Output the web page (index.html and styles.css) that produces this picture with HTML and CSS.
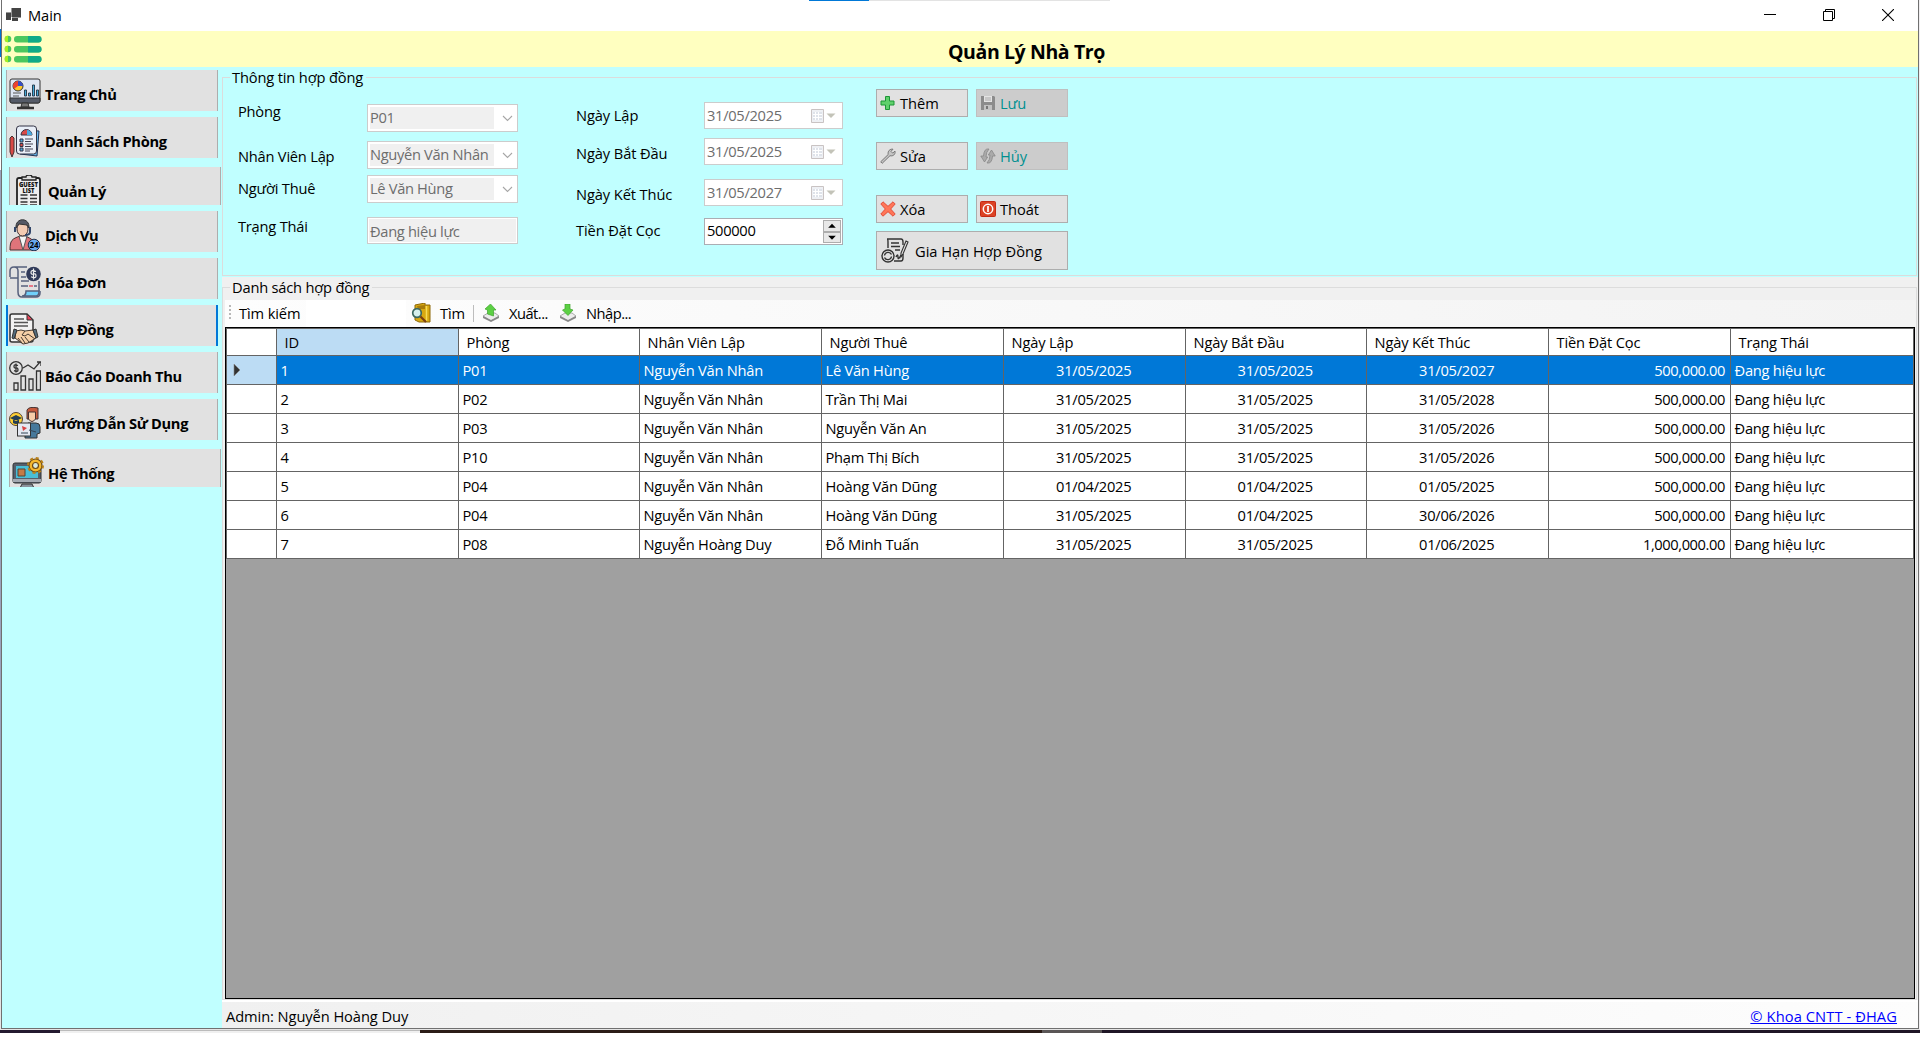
FILE: index.html
```html
<!DOCTYPE html>
<html lang="vi">
<head>
<meta charset="utf-8">
<title>Main</title>
<link rel="stylesheet" href="styles.css">
</head>
<body>
<div class="desktop">
<div class="edge-left"></div>
<div class="window">
  <header class="titlebar">
    <svg class="app-icon" width="16" height="16" viewBox="0 0 16 16"><path fill="#444" d="M6 1h9v9H6zM0 6h5v7H0zM6 11h6v3H6z"/><path fill="#999" d="M5 1h1v9H5zM0 5h5v1H0zM6 10h9v1H6z"/></svg>
    <span class="caption">Main</span>
    <div class="top-tab"><i></i></div>
    <div class="win-buttons">
      <svg width="12" height="12" viewBox="0 0 12 12"><path d="M0 5.5h12" stroke="#000"/></svg>
      <svg width="12" height="12" viewBox="0 0 12 12" fill="none" stroke="#000"><path d="M.5 2.5h9v9h-9zM2.5 2.500v-2h9v9h-2"/></svg>
      <svg width="12" height="12" viewBox="0 0 12 12"><path d="M0 0l12 12M12 0L0 12" stroke="#000" stroke-width="1.1"/></svg>
    </div>
  </header>
  <div class="banner">
    <svg class="menu" width="38" height="28" viewBox="0 0 38 28">
      <g fill="#4bc75e"><circle cx="4" cy="4" r="3.300"/><circle cx="4" cy="14" r="3.300"/><circle cx="4" cy="24" r="3.300"/><rect x="10" y="1" width="27.500" height="6.500" rx="3.200"/><rect x="10" y="11" width="27.500" height="6.500" rx="3.200"/><rect x="10" y="21" width="27.500" height="6.500" rx="3.200"/></g>
      <path fill="#a4f01f" d="M4 .7a3.300 3.300 0 0 0 0 6.600zM4 10.700a3.300 3.300 0 0 0 0 6.600zM4 20.700a3.300 3.300 0 0 0 0 6.600z"/>
      <path fill="#10aa88" d="M24 1h10.300a3.200 3.200 0 0 1 0 6.500H24zM24 11h10.300a3.200 3.200 0 0 1 0 6.500H24zM24 21h10.300a3.200 3.200 0 0 1 0 6.500H24z"/>
    </svg>
    <h1>Quản Lý Nhà Trọ</h1>
  </div>
  <div class="main">
    <nav class="sidebar">
      <a class="nav"><svg viewBox="0 0 32 32"><rect x="1" y="1" width="30" height="24" rx="2" fill="#dfe6f2" stroke="#333"/><path d="M1 20h30v3a2 2 0 0 1-2 2H3a2 2 0 0 1-2-2z" fill="#555b68" stroke="#333"/><path d="M13 25h6l1 4h-8z" fill="#777" stroke="#333"/><path d="M8 30h17" stroke="#333" stroke-width="2.500"/><circle cx="9" cy="8" r="5" fill="#ffc928" stroke="#333"/><path d="M9 8V3a5 5 0 0 0-4 8z" fill="#ed4030"/><path d="M9 8V3a5 5 0 0 1 5 5z" fill="#374fc4"/><path d="M15.500 18v-6h2v6zm4 0v-3h2v3zm4 0V7h2v11zm4 0v-6h2v6z" fill="#44a9d8" stroke="#234" stroke-width=".9"/><path d="M4 15h8M4 18h6" stroke="#555"/></svg><span>Trang Chủ</span></a>
      <a class="nav"><svg viewBox="0 0 32 32"><path d="M11 5l19 1-2 25-17-2z" fill="#67b9ed" stroke="#235"/><rect x="7.500" y="1" width="20" height="28" rx="3" fill="#e9eff8" stroke="#334" /><path d="M1 13l2-2 2 2v14l-2 5-2-5z" fill="#d94a47" stroke="#433"/><path d="M12 10a5 5 0 0 1 11 0z" fill="#d94a47" stroke="#334"/><path d="M18 5a5 5 0 0 1 5 5h-5z" fill="#4aa9de"/><path d="M11 14h3v3h-3zm0 9h3v3h-3z" fill="#4aa9de" stroke="#334"/><path d="M11 18.500h3v3h-3z" fill="#d94a47" stroke="#334"/><path d="M16 14h8M16 16.500h6M16 19h8M16 21.500h6M16 24h8M16 26h5" stroke="#445"/></svg><span>Danh Sách Phòng</span></a>
      <a class="nav shifted"><svg viewBox="0 0 32 32"><path d="M5 34V5q0-2 2-2h19q2 0 2 2v29" fill="#eee" stroke="#222" stroke-width="1.800"/><path d="M10 5V2h4q0-2 3-2t3 2h4v3z" fill="#ddd" stroke="#222" stroke-width="1.300"/><g font-family="Open Sans, sans-serif" font-weight="800" fill="#111" text-anchor="middle"><text x="16.500" y="12" font-size="6" textLength="19" lengthAdjust="spacingAndGlyphs">GUEST</text><text x="16.500" y="17.500" font-size="6" textLength="12" lengthAdjust="spacingAndGlyphs">LIST</text></g><path d="M8.500 20h7M8.500 23.500h7M8.500 27h7M8.500 30h7M18 20h7M18 23.500h7M18 27h7M18 30h7" stroke="#333" stroke-width="1.300"/></svg><span>Quản Lý</span></a>
      <a class="nav"><svg viewBox="0 0 32 32"><path d="M1 31c0-10 2-11 10-14h5c7 3 10 4 10 14z" fill="#df747a" stroke="#433"/><path d="M10 17l4 14 4-14z" fill="#f5f5f5" stroke="#555"/><ellipse cx="13.500" cy="10" rx="5.500" ry="7" fill="#f3cbb2" stroke="#433"/><path d="M7 9C6-2 21-2 20 9l-2-3-8-1z" fill="#555965" stroke="#333"/><path d="M6 8v5M21 8v5q0 3-5 3" stroke="#32466a" stroke-width="2" fill="none"/><circle cx="25" cy="26" r="5.800" fill="#68a8ed" stroke="#24334f"/><text x="25" y="29" font-size="8" font-weight="700" text-anchor="middle" font-family="Open Sans, sans-serif">24</text></svg><span>Dịch Vụ</span></a>
      <a class="nav"><svg viewBox="0 0 32 32" fill="none" stroke="#56607c" stroke-width="1.500"><path d="M1 11V5q0-4 4-4h13M9 12H1M9 5v21q0 5 4 5h14q4 0 4-4v-2M5 1q4 0 4 4M30 15v10"/><path d="M12 6h4M12 11h5M12 15h8" /><path d="M12 20h7M25 20h3"/><path d="M20 20h4" stroke="#e95468"/><path d="M17 25h13q0 5-3 5H13q4 0 4-5z" fill="#70d0fa"/><circle cx="24.500" cy="8" r="7.300" fill="#303a59" stroke="none"/><path d="M27 5.500q-5-2-5 .7t2.500 1.800 2.500 2-5 .700M24.500 2.500v11" stroke="#eee" stroke-width="1.200"/></svg><span>Hóa Đơn</span></a>
      <a class="nav active"><svg viewBox="0 0 32 32"><path d="M3 1h15l6 6v20q0 2-2 2H3q-2 0-2-2V3q0-2 2-2z" fill="#f2f2f2" stroke="#333" stroke-width="1.500"/><path d="M18 1v6h6z" fill="#e64459" stroke="#333"/><path d="M5 6h10M5 9.500h14M5 13h14" stroke="#555" stroke-width="1.300"/><path d="M7 18l5-1 4 1 8-1 3 8-8 5-5 1-8-6z" fill="#f5d0a8" stroke="#43382f"/><path d="M16 18l-3 4 3 1 3-2 7 5M9 25l4 5M12 24l4 6M16 24l4 5" stroke="#43382f" fill="none"/><path d="M5 16l3 1-3 9-2-1zM24 17l3-1 2 8-2 1z" fill="#536d7e" stroke="#333"/></svg><span>Hợp Đồng</span></a>
      <a class="nav"><svg viewBox="0 0 32 32" fill="none" stroke="#333" stroke-width="1.300"><circle cx="7" cy="8" r="6.300"/><path d="M9 5.500q-4-1.500-4 .7T7 8t2 2-4 .600M7 3.500v9M14 8l5-3 6 4 6-7M28 2h4v4M5 23h4v7H5zM12 16h4.500v14H12zM20 19h4v11h-4zM27.500 11h4v19h-4z"/></svg><span>Báo Cáo Doanh Thu</span></a>
      <a class="nav"><svg viewBox="0 0 32 32"><path d="M16 31V19l3-3h8q4 0 4 4v6l-3 1v4z" fill="#47799b" stroke="#333"/><path d="M18 3q2-4 11-2v11H18z" fill="#c65a3d" stroke="#433"/><path d="M19.500 5h7v7q-3.500 5-7 0z" fill="#f7cda8" stroke="#433"/><circle cx="7" cy="12" r="6.500" fill="#ffd034" stroke="#543"/><path d="M1 11l6-3 6 3-6 3zM4 13v3q3 2 6 0v-3" fill="#253f55"/><rect x="8.500" y="16" width="13" height="13" fill="#e4e9f2" stroke="#333"/><path d="M13 19l5 2-4 3z" fill="#d94343"/><path d="M12 26h7M20 23l7 2" stroke="#345"/></svg><span>Hướng Dẫn Sử Dụng</span></a>
      <a class="nav shifted"><svg viewBox="0 0 32 32"><rect x="1" y="6" width="28" height="20" rx="2" fill="#555f6c" stroke="#333"/><path d="M4 9h22v12H4z" fill="#49bed7"/><path d="M1 22h28v3H1z" fill="#a4aab2"/><path d="M10 27h10l2 4H8z" fill="#8a929b" stroke="#333"/><path d="M6 12h7v7H6z" fill="#c47b46" stroke="#543"/><circle cx="23.500" cy="8.500" r="6.500" fill="#f5b92e" stroke="#6d4a17" stroke-width="1.200"/><circle cx="23.500" cy="8.500" r="7.500" fill="none" stroke="#b98018" stroke-width="2" stroke-dasharray="3 2.900"/><circle cx="23.500" cy="8.500" r="3" fill="#d8eadf" stroke="#6d4a17" stroke-width="1.200"/></svg><span>Hệ Thống</span></a>
    </nav>
    <div class="content">
      <section class="panel-info">
        <fieldset class="group info">
          <legend>Thông tin hợp đồng</legend>
          <div class="form">
            <div class="labels labels-a"><label>Phòng</label><label>Nhân Viên Lập</label><label>Người Thuê</label><label>Trạng Thái</label></div>
            <div class="fields fields-a">
              <div class="combo"><b>P01</b><svg width="11" height="7" viewBox="0 0 11 7"><path d="M1 1l4.500 4.500L10 1"/></svg></div>
              <div class="combo"><b>Nguyễn Văn Nhân</b><svg width="11" height="7" viewBox="0 0 11 7"><path d="M1 1l4.500 4.500L10 1"/></svg></div>
              <div class="combo"><b>Lê Văn Hùng</b><svg width="11" height="7" viewBox="0 0 11 7"><path d="M1 1l4.500 4.500L10 1"/></svg></div>
              <div class="combo plain"><b>Đang hiệu lực</b></div>
            </div>
            <div class="labels labels-b"><label>Ngày Lập</label><label>Ngày Bắt Đầu</label><label>Ngày Kết Thúc</label><label>Tiền Đặt Cọc</label></div>
            <div class="fields fields-b">
              <div class="date"><span>31/05/2025</span><svg width="26" height="16" viewBox="0 0 26 16"><use href="#cal"/></svg></div>
              <div class="date"><span>31/05/2025</span><svg width="26" height="16" viewBox="0 0 26 16"><use href="#cal"/></svg></div>
              <div class="date"><span>31/05/2027</span><svg width="26" height="16" viewBox="0 0 26 16"><use href="#cal"/></svg></div>
              <div class="date spin"><span>500000</span><div class="spinner"><svg viewBox="0 0 16 10"><path d="M4 7h8L8 3z"/></svg><svg viewBox="0 0 16 10"><path d="M4 3h8L8 7z"/></svg></div></div>
            </div>
            <div class="actions">
              <button><svg viewBox="0 0 16 16"><path d="M5.500 1.500h4v4.500h4.500v4H9.500v4.500h-4V10H1V6h4.500z" fill="#5fd06c" stroke="#1d9637"/></svg>Thêm</button>
              <button class="off"><svg viewBox="0 0 16 16"><path d="M1 1h13l1 1v13H1z" fill="#8c8c8c"/><path d="M4 1h8v6H4z" fill="#e4e4e4"/><path d="M5 3h6M5 5h6" stroke="#aaa"/><path d="M4 10h8v5H4z" fill="#c2c2c2"/><path d="M6 11h2v3H6z" fill="#777"/></svg>Lưu</button>
              <button><svg viewBox="0 0 16 16"><path d="M2.200 15.300L.7 13.800l7.500-7.300C7.500 3 10 .7 13 1.200l-2 2.200 1.700 1.700 2.300-2c.7 3.300-2 5.400-5 4.600z" fill="#c5c5c5" stroke="#777" stroke-width="1"/></svg>Sửa</button>
              <button class="off"><svg viewBox="0 0 16 16"><path d="M9 1Q4 0 3.500 8H.8L4.500 14l3.200-5H6Q6 4 9 1zM7 15q5 1 5.500-7h2.700L11.500 2 8.300 7H10q0 5-3 8z" fill="#aaa" stroke="#888" stroke-width=".8"/></svg>Hủy</button>
              <button><svg viewBox="0 0 16 16"><path d="M3 .8L8 5.300 13 .8 15.200 3 10.700 8l4.500 5-2.200 2.200L8 10.700l-5 4.500L.8 13l4.500-5L.8 3z" fill="#ff7658" stroke="#dd3c28" stroke-width=".8"/></svg>Xóa</button>
              <button><svg viewBox="0 0 16 16"><rect x=".5" y=".5" width="15" height="15" rx="1" fill="#dc4325" stroke="#c52b15"/><circle cx="8" cy="8" r="4.700" fill="none" stroke="#fff" stroke-width="1.500"/><path d="M8 5v6" stroke="#fff" stroke-width="1.700"/></svg>Thoát</button>
              <button class="wide"><svg viewBox="0 0 28 26" fill="none" stroke="#333" stroke-width="1.400"><path d="M7 10V4q0-3-1-3h14q2 0 2 3v3M13 23h7q2 0 2-3v-4M10 5h8M10 8.500h9M14 12h5M15 19q2-4 2 0t3-2"/><path d="M27 4l-5 12-2 3v-4l5-12z" stroke-width="1.100"/><circle cx="7" cy="18" r="6"/><path d="M3.500 17.500a3.700 3.700 0 0 1 7-1M10.500 18.500a3.700 3.700 0 0 1-7 1"/></svg>Gia Hạn Hợp Đồng</button>
            </div>
          </div>
        </fieldset>
      </section>
      <section class="panel-list">
        <fieldset class="group list">
          <legend>Danh sách hợp đồng</legend>
          <div class="toolbar">
            <i class="grip"></i><span class="t-label">Tìm kiếm</span><div class="search"></div>
            <svg class="find" width="20" height="20" viewBox="0 0 20 20"><path d="M4 2l10-2v2h5v17H8L4 17z" fill="#d9a911" stroke="#8e6808"/><path d="M6 3l8-1v4H7z" fill="#a87c0b"/><path d="M15.500 3v15" fill="none" stroke="#f7dd56" stroke-width="1.500"/><circle cx="6" cy="10" r="4.300" fill="#d5f0ee" stroke="#3b6961" stroke-width="1.700"/><path d="M9.500 13.500L15 19" stroke="#7a3f11" stroke-width="2.200"/></svg>
            <span class="t-find">Tìm</span><i class="sep"></i>
            <svg class="io" width="18" height="18" viewBox="0 0 18 18"><path d="M1 12l5-3h7l4 3-8 5z" fill="#ececec" stroke="#aaa"/><path d="M1 12l8 4 8-4v2l-8 4-8-4z" fill="#888"/><path d="M8.500 0l5.500 6h-2.500v6l-6-2V6L3 5z" fill="#5cd044" stroke="#3fa52e" stroke-width=".7"/></svg>
            <span class="t-out">Xuất...</span>
            <svg class="io" width="18" height="18" viewBox="0 0 18 18"><path d="M1 12l5-3h7l4 3-8 5z" fill="#ececec" stroke="#aaa"/><path d="M1 12l8 4 8-4v2l-8 4-8-4z" fill="#888"/><path d="M6 0h5v5l3 1-5 5.500L3.500 6 6 5z" fill="#5cd044" stroke="#3fa52e" stroke-width=".7"/></svg>
            <span class="t-in">Nhập...</span>
          </div>
          <div class="grid">
            <table>
              <colgroup><col class="c0"><col class="w182"><col class="w181"><col class="w182"><col class="w182"><col class="w182"><col class="w181"><col class="w182"><col class="w182"><col class="w183"></colgroup>
              <thead><tr><th></th><th class="hot">ID</th><th>Phòng</th><th>Nhân Viên Lập</th><th>Người Thuê</th><th>Ngày Lập</th><th>Ngày Bắt Đầu</th><th>Ngày Kết Thúc</th><th>Tiền Đặt Cọc</th><th>Trạng Thái</th></tr></thead>
              <tbody>
              <tr class="selected"><td><svg width="8" height="14" viewBox="0 0 8 14"><path d="M1 1l6 6-6 6z" fill="#333" stroke="#888" stroke-width=".6"/></svg></td><td>1</td><td>P01</td><td>Nguyễn Văn Nhân</td><td>Lê Văn Hùng</td><td>31/05/2025</td><td>31/05/2025</td><td>31/05/2027</td><td>500,000.00</td><td>Đang hiệu lực</td></tr>
              <tr><td></td><td>2</td><td>P02</td><td>Nguyễn Văn Nhân</td><td>Trần Thị Mai</td><td>31/05/2025</td><td>31/05/2025</td><td>31/05/2028</td><td>500,000.00</td><td>Đang hiệu lực</td></tr>
              <tr><td></td><td>3</td><td>P03</td><td>Nguyễn Văn Nhân</td><td>Nguyễn Văn An</td><td>31/05/2025</td><td>31/05/2025</td><td>31/05/2026</td><td>500,000.00</td><td>Đang hiệu lực</td></tr>
              <tr><td></td><td>4</td><td>P10</td><td>Nguyễn Văn Nhân</td><td>Phạm Thị Bích</td><td>31/05/2025</td><td>31/05/2025</td><td>31/05/2026</td><td>500,000.00</td><td>Đang hiệu lực</td></tr>
              <tr><td></td><td>5</td><td>P04</td><td>Nguyễn Văn Nhân</td><td>Hoàng Văn Dũng</td><td>01/04/2025</td><td>01/04/2025</td><td>01/05/2025</td><td>500,000.00</td><td>Đang hiệu lực</td></tr>
              <tr><td></td><td>6</td><td>P04</td><td>Nguyễn Văn Nhân</td><td>Hoàng Văn Dũng</td><td>31/05/2025</td><td>01/04/2025</td><td>30/06/2026</td><td>500,000.00</td><td>Đang hiệu lực</td></tr>
              <tr><td></td><td>7</td><td>P08</td><td>Nguyễn Hoàng Duy</td><td>Đỗ Minh Tuấn</td><td>31/05/2025</td><td>31/05/2025</td><td>01/06/2025</td><td>1,000,000.00</td><td>Đang hiệu lực</td></tr>
              </tbody>
            </table>
          </div>
        </fieldset>
      </section>
      <footer class="status"><span>Admin: Nguyễn Hoàng Duy</span><a>© Khoa CNTT - ĐHAG</a></footer>
    </div>
  </div>
</div>
<div class="edge-right"></div>
<div class="taskbar"><i class="t1"></i><i class="t2"></i><i class="t3"></i><i class="t4"></i><i class="t5"></i></div>
</div>
<svg width="0" height="0" class="defs"><defs><g id="cal"><path d="M1.500 1.500h12v13h-12z" fill="#eef0f4" stroke="#c9c3c3"/><path d="M3 4h9v8H3z" fill="#dfe3ea"/><path d="M3 6.500h9M3 9.500h9M5.500 4v8M8.500 4v8" stroke="#fff"/><path d="M16.500 5.500h9L21 10z" fill="#c3c3b8"/></g></defs></svg>
</body>
</html>
```
FILE: styles.css
```css
* { box-sizing: border-box; }
body { margin: 0; background: #fff; font: 14.67px/20px "Open Sans", "Noto Sans", sans-serif; color: #000; letter-spacing: -0.25px; overflow: hidden; }
svg { display: block; flex: none; }
i { display: block; }
.defs { position: absolute; }
.desktop { display: grid; grid-template-columns: 1px 1918px 1px; grid-template-rows: 1029px 4px; height: 1033px; }
.edge-left { background: linear-gradient(#fff 0 29px, #0072d2 29px 57px, #fff 57px 170px, #9aa3bd 170px 960px, #e5e5e5 960px); }
.edge-right { background: #f0eef0; }
.window { border: 1px solid #707070; border-top: 0; display: flex; flex-direction: column; min-width: 0; }

.titlebar { height: 31px; display: flex; align-items: flex-start; padding-left: 4px; }
.app-icon { margin-top: 7px; }
.caption { margin: 5px 0 0 6px; width: 41px; letter-spacing: -0.1px; }
.top-tab { margin-left: 740px; width: 301px; height: 1px; background: #e3e3e3; }
.top-tab i { width: 60px; height: 1px; background: #0078d7; }
.win-buttons { margin: 9px 24px 0 auto; display: flex; gap: 47px; }

.banner { height: 36px; background: #ffffc0; display: flex; align-items: flex-start; }
.menu { margin: 4px 0 0 2px; }
h1 { margin: 8px 0 0 906px; font-size: 19.5px; line-height: 26px; font-weight: 700; letter-spacing: -0.4px; white-space: nowrap; }

.main { flex: 1; display: flex; background: #c0ffff; min-height: 0; }
.sidebar { width: 220px; padding: 3px 0 0 4px; display: flex; flex-direction: column; gap: 6px; }
.nav { width: 212px; height: 41px; background: #e1e1e1; border: 1px solid #adadad; border-width: 0 1px; display: flex; overflow: hidden; font-weight: 700; font-size: 14.67px; letter-spacing: -0.32px; white-space: nowrap; }
.nav svg { width: 32px; height: 32px; margin: 8px 0 0 2px; letter-spacing: 0; }
.nav span { margin: 14px 0 0 4px; }
.nav.shifted { margin: 3px 0 0 3px; height: 38px; }
.nav.active { border: 2px solid #0078d7; border-width: 0 2px; }
.nav.active svg { margin-left: 1px; }
.nav.active span { margin-left: 3px; }

.content { flex: 1; display: flex; flex-direction: column; min-width: 0; }
.panel-info { height: 210px; }
.panel-list { height: 723px; background: #f0f0f0; }
.group { margin: 0; padding: 0; min-width: 0; border: 1px solid #dcdcdc; width: 1695px; }
legend { margin-left: 7px; padding: 0 3px 0 2px; height: 20px; letter-spacing: -0.15px; }
.info { height: 209px; }
.list { height: 723px; }
.list legend { letter-spacing: -0.2px; }

.form { display: flex; align-items: flex-start; margin-left: 15px; margin-top: 14px; white-space: nowrap; }
.labels { display: flex; flex-direction: column; height: 170px; letter-spacing: -0.1px; }
.labels-a { width: 129px; letter-spacing: -0.22px; }
.labels-a label:nth-child(2) { margin-top: 25px; }
.labels-a label:nth-child(3) { margin-top: 12px; }
.labels-a label:nth-child(4) { margin-top: 18px; }
.labels-b { width: 128px; margin-left: 58px; padding-top: 4px; }
.labels-b label:nth-child(2) { margin-top: 18px; }
.labels-b label:nth-child(3) { margin-top: 21px; }
.labels-b label:nth-child(4) { margin-top: 16px; }
.fields { display: flex; flex-direction: column; }
.fields-a { width: 151px; padding-top: 3px; }
.combo { height: 28px; background: #fff; border: 1px solid #ccc; padding: 2px; display: flex; align-items: center; justify-content: space-between; }
.combo b { font-weight: 400; width: 124px; height: 22px; background: #f0f0f0; color: #6d6d6d; letter-spacing: -0.32px; }
.combo svg { margin-right: 2px; fill: none; stroke: #a6a6a6; stroke-width: 1.1; }
.combo:nth-child(2) { margin-top: 9px; }
.combo:nth-child(3) { margin-top: 6px; }
.combo.plain { margin-top: 14px; height: 27px; padding: 1px; }
.plain b { width: 100%; height: 23px; padding: 2px 0 0 1px; }
.fields-b { width: 139px; padding-top: 1px; }
.date { height: 27px; background: #fff; border: 1px solid #ccc; color: #6d6d6d; padding: 2px 6px 0 2px; display: flex; justify-content: space-between; letter-spacing: -0.3px; }
.date > svg { margin-top: 3px; }
.date:nth-child(2) { margin-top: 9px; }
.date:nth-child(3) { margin-top: 14px; }
.date.spin { margin-top: 12px; color: #000; border-color: #abadb3; padding: 1px 1px 1px 2px; }
.spinner { display: flex; flex-direction: column; width: 18px; }
.spinner svg { width: 18px; height: 11.5px; background: #e8e8e8; border: 1px solid #adadad; }
.actions { margin: -12px 0 0 33px; width: 192px; display: grid; grid-template-columns: 92px 92px; grid-template-rows: 53px 53px 36px 39px; column-gap: 8px; }
button { font: inherit; letter-spacing: -0.05px; border: 1px solid #adadad; background: #e1e1e1; color: #000; display: flex; align-items: center; padding: 0 0 0 3px; margin: 0; gap: 4px; white-space: nowrap; }
button svg { width: 16px; height: 16px; }
button.off { background: #ccc; border-color: #bfbfbf; color: #009090; }
.actions button { height: 28px; }
.actions .wide { grid-column: 1 / 3; height: 39px; padding-left: 4px; gap: 6px; letter-spacing: 0; }
.wide svg { width: 28px; height: 26px; }

.toolbar { height: 27px; margin: 3px 0 0 2px; background: linear-gradient(90deg, #fdfdfd, #f3f3f3); display: flex; align-items: flex-start; white-space: nowrap; padding-top: 3px; letter-spacing: -0.12px; }
.grip { width: 2px; height: 15px; margin: 2px 0 0 4px; background: repeating-linear-gradient(#b8b8b8 0 2px, transparent 2px 4px); }
.t-label { margin-left: 8px; width: 67px; }
.search { width: 100px; height: 27px; margin-top: -3px; background: #fff; }
.find { margin: 0 0 0 5px; }
.t-find { margin-left: 9px; width: 33px; }
.sep { width: 1px; height: 17px; margin-top: 2px; background: #bdbdbd; }
.io { margin: 1px 0 0 8px; }
.t-out { width: 50px; margin-left: 9px; letter-spacing: -0.5px; }
.t-in { margin-left: 9px; letter-spacing: -0.5px; }
.toolbar .t-out + .io { margin-left: 0; }
.grid { width: 1690px; height: 672px; margin-left: 2px; border: 1px solid #000; background: #a0a0a0; }
table { table-layout: fixed; width: 1688px; border-collapse: separate; border-spacing: 0; background: #fff; border-left: 1px solid #646464; border-top: 1px solid #646464; }
.c0 { width: 50px; }
.w181 { width: 181px; }
.w182 { width: 182px; }
.w183 { width: 183px; }
th, td { padding: 0 5px 0 4px; border-right: 1px solid #646464; border-bottom: 1px solid #646464; font-weight: 400; text-align: left; height: 29px; line-height: 20px; white-space: nowrap; }
td { padding-left: 3.5px; }
th { height: 27px; padding-left: 7.5px; letter-spacing: -0.15px; }
.hot, .selected td:first-child { background: #bcdcf4; }
.selected { background: #0078d7; color: #fff; }
td:first-child svg { margin-left: 2px; }
td:nth-child(n+6):nth-child(-n+8) { text-align: center; }
td:nth-child(9) { text-align: right; letter-spacing: -0.4px; }

.status { flex: 1; display: flex; justify-content: space-between; align-items: center; padding: 2px 21px 0 4px; border-top: 2px solid #fff; background: linear-gradient(90deg, #f0f0f0, #fdfdfd); letter-spacing: -0.08px; }
.status a { color: #00f; text-decoration: underline; letter-spacing: 0.1px; }
.taskbar { grid-column: 1 / 4; display: flex; border-top: 1px solid #e5e5e5; }
.t1 { width: 60px; background: #241a30; }
.t2 { width: 360px; background: #f0f0f0; border-top: 1px solid #bbb; }
.t3 { width: 622px; background: #2b1c17; }
.t4 { width: 60px; background: #5a5656; }
.t5 { flex: 1; background: #1f1626; }
```
